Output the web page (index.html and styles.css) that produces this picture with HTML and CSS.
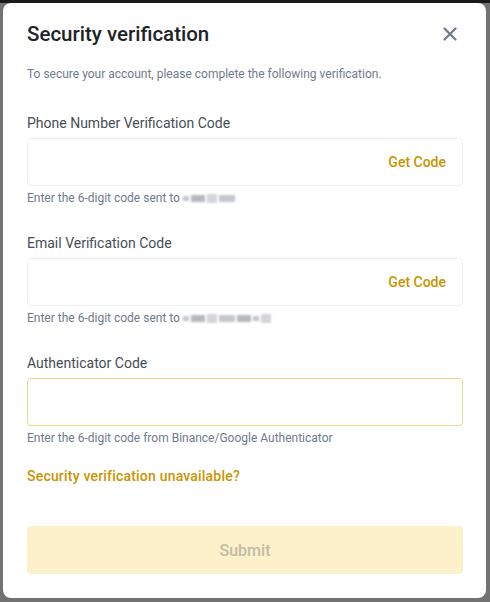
FILE: index.html
```html
<!DOCTYPE html>
<html lang="en">
<head>
<meta charset="UTF-8">
<meta name="viewport" content="width=device-width, initial-scale=1.0">
<title>Security verification</title>
<link rel="stylesheet" href="styles.css">
</head>
<body>

<div class="modal">
  <div class="modal-head">
    <h2 class="title">Security verification</h2>
    <button class="close" aria-label="Close">
      <svg width="14" height="14" viewBox="0 0 14 14"><path d="M1.5 1.5l11 11M12.5 1.5l-11 11" stroke="#707a8a" stroke-width="2.2" stroke-linecap="round"/></svg>
    </button>
  </div>
  <p class="intro">To secure your account, please complete the following verification.</p>

  <div class="field">
    <label class="label">Phone Number Verification Code</label>
    <div class="input">
      <span class="get-code">Get Code</span>
    </div>
    <div class="hint">Enter the 6-digit code sent to <span class="blur"><i class="b1"></i><i class="b2"></i><i class="b3"></i><i class="b4"></i></span></div>
  </div>

  <div class="field">
    <label class="label">Email Verification Code</label>
    <div class="input">
      <span class="get-code">Get Code</span>
    </div>
    <div class="hint">Enter the 6-digit code sent to <span class="blur"><i class="b1"></i><i class="b2"></i><i class="b3"></i><i class="b4"></i><i class="b2"></i><i class="b1"></i><i class="b3"></i></span></div>
  </div>

  <div class="field">
    <label class="label">Authenticator Code</label>
    <div class="input active"></div>
    <div class="hint">Enter the 6-digit code from Binance/Google Authenticator</div>
  </div>

  <a class="link" href="#">Security verification unavailable?</a>

  <button class="submit" disabled>Submit</button>
</div>

</body>
</html>
```

FILE: styles.css
```css
body {
  margin: 0;
  height: 602px;
  background-color: #727272;
  border-top: 3px solid #1a1a1a;
  box-sizing: border-box;
  font-family: Roboto, "Noto Sans", Arial, sans-serif;
  overflow: hidden;
}
.modal {
  margin: 0 4px 0 3px;
  height: 595px;
  box-sizing: border-box;
  padding: 17px 23px 24px 24px;
  background: #fff;
  border-radius: 8px;
  display: flex;
  flex-direction: column;
}
.modal-head {
  display: flex;
  justify-content: space-between;
  align-items: center;
  height: 28px;
}
.title {
  margin: 0;
  font-size: 20.5px;
  font-weight: 500;
  color: #1e2329;
  line-height: 28px;
}
.close {
  border: 0;
  background: none;
  padding: 0;
  margin-right: 6px;
  display: flex;
}
.intro {
  margin: 18px 0 31px;
  font-size: 12px;
  line-height: 16px;
  color: #707a8a;
}
.field {
  display: flex;
  flex-direction: column;
  margin-bottom: 27px;
}
.label {
  font-size: 14px;
  line-height: 20px;
  color: #474d57;
  margin-bottom: 5px;
}
.input {
  height: 48px;
  box-sizing: border-box;
  border: 1px solid #eef0f2;
  border-radius: 4px;
  display: flex;
  align-items: center;
  justify-content: flex-end;
  padding-right: 16px;
}
.input.active {
  border-color: #ead68c;
}
.get-code {
  font-size: 14px;
  font-weight: 500;
  color: #c99400;
}
.hint {
  margin-top: 4px;
  font-size: 12px;
  line-height: 16px;
  color: #707a8a;
  display: flex;
  align-items: center;
}
.blur {
  display: inline-flex;
  align-items: center;
  gap: 2px;
  margin-left: 3px;
  filter: blur(1px);
}
.blur i {
  display: inline-block;
  height: 7px;
  background: #c4c7cc;
}
.blur .b1 { width: 6px; height: 5px; }
.blur .b2 { width: 14px; background: #b5b8bd; }
.blur .b3 { width: 10px; height: 9px; background: #d3d5d8; }
.blur .b4 { width: 16px; }
.link {
  margin-top: -7px;
  font-size: 14px;
  line-height: 20px;
  font-weight: 500;
  letter-spacing: 0.2px;
  color: #c99400;
  text-decoration: none;
}
.submit {
  margin-top: 40px;
  height: 48px;
  border: 0;
  border-radius: 4px;
  background: #fcf1cb;
  color: #c4bca2;
  font-family: inherit;
  font-size: 16px;
  font-weight: 500;
}
```
